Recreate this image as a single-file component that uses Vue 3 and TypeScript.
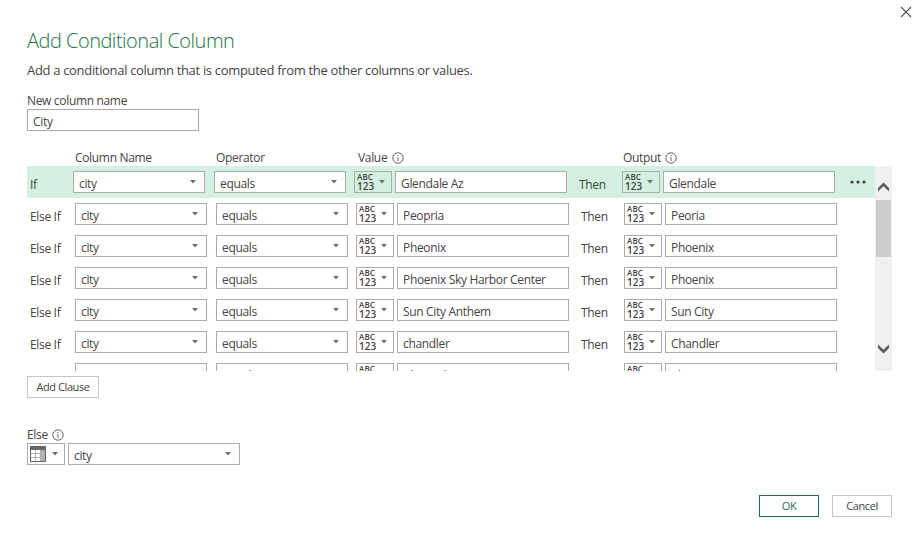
<script setup lang="ts">
import { ref } from 'vue'

interface Clause {
  label: string
  column: string
  operator: string
  value: string
  output: string
}

const newName = ref('City')
const selected = ref(0)
const clauses = ref<Clause[]>([
  { label: 'If', column: 'city', operator: 'equals', value: 'Glendale Az', output: 'Glendale' },
  { label: 'Else If', column: 'city', operator: 'equals', value: 'Peopria', output: 'Peoria' },
  { label: 'Else If', column: 'city', operator: 'equals', value: 'Pheonix', output: 'Phoenix' },
  { label: 'Else If', column: 'city', operator: 'equals', value: 'Phoenix Sky Harbor Center', output: 'Phoenix' },
  { label: 'Else If', column: 'city', operator: 'equals', value: 'Sun City Anthem', output: 'Sun City' },
  { label: 'Else If', column: 'city', operator: 'equals', value: 'chandler', output: 'Chandler' },
  { label: 'Else If', column: 'city', operator: 'equals', value: 'Ahwatukee', output: 'Phoenix' },
])
</script>

<template>
  <main class="dialog">
    <button class="close" aria-label="Close">
      <svg width="12" height="12" viewBox="0 0 12 12"><path d="M1 1L11 11M11 1L1 11" /></svg>
    </button>
    <h1>Add Conditional Column</h1>
    <p class="lead">Add a conditional column that is computed from the other columns or values.</p>
    <label class="name-label">New column name</label>
    <div class="field name-field">{{ newName }}</div>

    <div class="heads">
      <span class="h-col">Column Name</span>
      <span class="h-op">Operator</span>
      <span class="h-val">Value
        <svg class="info" width="12" height="12" viewBox="0 0 12 12"><circle cx="6" cy="6" r="5.2" /><path d="M6 5.2V9M6 3V4.1" /></svg>
      </span>
      <span>Output
        <svg class="info" width="12" height="12" viewBox="0 0 12 12"><circle cx="6" cy="6" r="5.2" /><path d="M6 5.2V9M6 3V4.1" /></svg>
      </span>
    </div>

    <section class="list">
      <div class="rows">
        <div v-for="(c, i) in clauses" :key="i" class="row" :class="{ active: i === selected }" @click="selected = i">
          <span class="lbl">{{ c.label }}</span>
          <div class="field select col">{{ c.column }}<i class="caret"></i></div>
          <div class="field select op">{{ c.operator }}<i class="caret"></i></div>
          <div class="type"><span class="any"><b>ABC</b><b class="num">123</b></span><i class="caret"></i></div>
          <div class="field">{{ c.value }}</div>
          <span class="then">Then</span>
          <div class="type"><span class="any"><b>ABC</b><b class="num">123</b></span><i class="caret"></i></div>
          <div class="field">{{ c.output }}</div>
          <svg v-if="i === selected" class="dots" width="16" height="4" viewBox="0 0 16 4"><circle cx="2" cy="2" r="1.6" /><circle cx="8" cy="2" r="1.6" /><circle cx="14" cy="2" r="1.6" /></svg>
        </div>
      </div>
      <div class="scroll">
        <svg width="13" height="10" viewBox="0 0 13 10"><path d="M1 6L6.5 0.5L12 6V9.5L6.5 4.3L1 9.5Z" /></svg>
        <div class="thumb"></div>
        <svg class="down" width="13" height="10" viewBox="0 0 13 10"><path d="M1 4L6.5 9.5L12 4V0.5L6.5 5.7L1 0.5Z" /></svg>
      </div>
    </section>

    <button class="btn add">Add Clause</button>

    <div class="else-label">Else
      <svg class="info" width="12" height="12" viewBox="0 0 12 12"><circle cx="6" cy="6" r="5.2" /><path d="M6 5.2V9M6 3V4.1" /></svg>
    </div>
    <div class="else-row">
      <div class="type">
        <svg class="table" width="16" height="16" viewBox="0 0 16 16" shape-rendering="crispEdges">
          <rect width="16" height="16" fill="#666" />
          <rect x="1" y="4" width="14" height="11" fill="#b1b1b1" />
          <path d="M1 4h4v3H1zM6 4h4v3H6zM1 8h4v3H1zM6 8h4v3H6zM1 12h4v3H1zM6 12h4v3H6z" fill="#fff" />
        </svg>
        <i class="caret"></i>
      </div>
      <div class="field select">city<i class="caret"></i></div>
    </div>

    <footer>
      <button class="btn ok">OK</button>
      <button class="btn">Cancel</button>
    </footer>
  </main>
</template>

<style>
body { margin: 0; background: #fff; }
</style>

<style scoped>
* { box-sizing: border-box; }
.dialog {
  position: relative;
  display: flex;
  flex-direction: column;
  width: 922px;
  height: 544px;
  padding: 27px 30px 0 27px;
  background: #fff;
  color: #444;
  font: 12px/16px "Open Sans", "Noto Sans", sans-serif;
  letter-spacing: -0.33px;
  white-space: nowrap;
}
.close { position: absolute; top: 6px; right: 10px; width: 12px; height: 12px; padding: 0; border: 0; background: none; }
.close svg { display: block; fill: none; stroke: #555; stroke-width: 1.1; }
h1 { margin: 0; color: #217346; font-size: 20px; line-height: 27px; font-weight: 300; letter-spacing: -0.5px; }
.lead { margin: 7px 0 0; font-size: 13px; line-height: 18px; letter-spacing: -0.32px; }
.name-label { margin-top: 14px; }
.field {
  position: relative;
  width: 172px;
  height: 22px;
  padding: 2px 0 0 5px;
  border: 1px solid #ababab;
  background: #fff;
  line-height: 20px;
}
.heads { display: flex; margin-top: 19px; padding-left: 48px; height: 16px; }
.h-col { width: 141px; }
.h-op { width: 142px; }
.h-val { width: 265px; }
.info { margin-left: 1.5px; vertical-align: -2px; fill: none; stroke: #666; stroke-width: 1; }
.list { display: flex; height: 205px; overflow: hidden; }
.rows { width: 848px; }
.row { display: flex; align-items: flex-start; height: 32px; padding: 5px 0 0 3px; }
.lbl { width: 45px; padding-top: 6px; }
.then { width: 43px; padding: 6px 0 0 12px; margin-right: 12px; }
.col, .op { width: 132px; }
.col { margin-right: 9px; }
.op { margin-right: 8px; }
.active { background: #d3f0e0; }
.active .lbl { width: 43px; }
.type {
  position: relative;
  flex: none;
  width: 38px;
  height: 22px;
  margin-right: 3px;
  border: 1px solid #ababab;
}
.any { display: flex; flex-direction: column; width: 20px; padding: 1px 0 0 2px; }
.any b { font: 600 8px/8px "Open Sans", sans-serif; letter-spacing: 0.1px; }
.any .num { font-size: 10px; line-height: 10px; letter-spacing: 0; }
.caret {
  position: absolute;
  top: 8px;
  right: 8px;
  width: 6px;
  height: 3.5px;
  background: #707070;
  clip-path: polygon(0 0, 100% 0, 50% 100%);
}
.type .caret { right: 6px; }
.dots { margin: 9px 0 0 15px; fill: #444; }
.scroll { display: flex; flex-direction: column; align-items: center; width: 17px; padding-top: 16px; background: #f0f0f0; }
.scroll svg { fill: #5a5a5a; }
.thumb { width: 15px; height: 57px; margin-top: 8px; background: #cdcdcd; }
.down { margin-top: 87px; }
.btn {
  width: 60px;
  height: 22px;
  padding: 0;
  border: 1px solid #c6c6c6;
  background: #fff;
  color: #444;
  font: 11px/18px "Open Sans", sans-serif;
  letter-spacing: -0.42px;
}
.add { width: 72px; margin-top: 5px; }
.else-label { height: 16px; margin-top: 29px; }
.else-row { display: flex; }
.table { display: block; margin: 2px; }
.ok { border-color: #217346; color: #217346; }
footer { display: flex; justify-content: flex-end; gap: 13px; margin-top: 30px; }
</style>
